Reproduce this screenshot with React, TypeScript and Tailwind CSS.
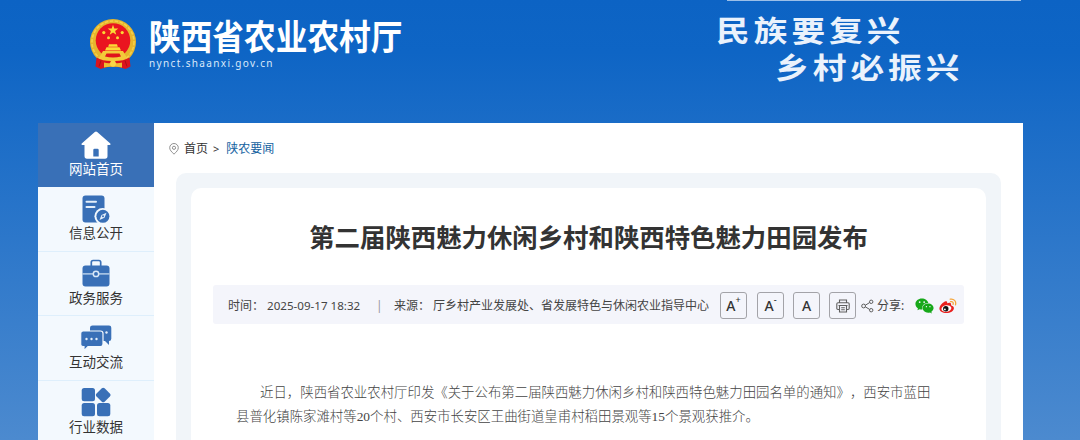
import type { ReactNode } from 'react'
import { FaWeixin } from 'react-icons/fa6'

function Emblem() {
  return (
    <svg viewBox="0 0 48 52" className="h-[52px] w-12">
      <circle cx="24" cy="24" r="23" fill="#e6b52c" />
      <circle cx="24" cy="24" r="21" fill="none" stroke="#f4d04a" strokeWidth="1.6" strokeDasharray="3.500 1.500" />
      <circle cx="24" cy="22.500" r="17.300" fill="#ea1420" />
      <path d="M24 6.800l1.300 3.800h4l-3.200 2.400 1.200 3.800-3.300-2.300-3.300 2.300 1.200-3.800-3.200-2.400h4z" fill="#fbd935" />
      <g fill="#fbd935">
        <circle cx="14.800" cy="14.600" r="1.600" />
        <circle cx="33.200" cy="14.600" r="1.600" />
        <circle cx="19.500" cy="19.800" r="1.500" />
        <circle cx="28.500" cy="19.800" r="1.500" />
        <path d="M20 26.300h8l.8 2.500h-9.600zM17.500 29.300h13l1.500 3.200H16z" />
      </g>
      <path d="M14 33h20l3.500 6-2 3.500q-11.500 3-23 0l-2-3.500z" fill="#f3c93a" />
      <path d="M17.500 35.600h13l1.500 3q-8 2-16 0z" fill="#e0121b" />
      <path d="M7.500 39.500q7 4 16.500 3.500 9.500.5 16.500-3.500l1 9-5 2.500-5-1.500q-7.500-2-15 0l-5 1.500-5-2.500z" fill="#dc141d" />
      <path d="M15 44.500q5 1.500 9 0 4 1.500 9 0v5q-5-1-9-.5-4-.5-9 .5z" fill="#edbd31" />
      <circle cx="24" cy="45.500" r="2.900" fill="#f8d747" />
      <path d="M12 42.500l-2 6M36 42.500l2 6" stroke="#ab1017" />
    </svg>
  )
}

function HomeIcon() {
  return (
    <svg viewBox="0 0 30 28" className="h-7 w-[30px]">
      <path
        fill="currentColor"
        fillRule="evenodd"
        d="M13.8 1q1.2-1 2.4 0L29 12.2q1.3 1.3-.4 1.9H26.500v11q0 2.600-2.500 2.600H6q-2.500 0-2.500-2.600v-11H1.400q-1.700-.6-.4-1.900zM12.300 25.600h5.400V19q0-1.200-1.200-1.200h-3q-1.200 0-1.200 1.200z"
      />
    </svg>
  )
}

function InfoIcon() {
  return (
    <svg viewBox="0 0 28 28" className="h-7 w-7">
      <rect x="0.500" y="0.500" width="22" height="27" rx="3" fill="currentColor" />
      <path d="M4.500 6.700h9.500M4.500 12h8" stroke="#e5effa" strokeWidth="2" strokeLinecap="round" />
      <circle cx="20.700" cy="21.300" r="8.300" fill="#f3f9fe" />
      <circle cx="20.900" cy="21.300" r="6.500" fill="currentColor" />
      <path d="M24.500 17.700l-2 5-5 2.200 2-5z" fill="#e5effa" />
      <circle cx="21" cy="21.300" r="1" fill="currentColor" />
    </svg>
  )
}

function CaseIcon() {
  return (
    <svg viewBox="0 0 28 28" className="h-7 w-7">
      <path d="M9.300 7V3.300q0-1.800 1.800-1.800h5.800q1.800 0 1.800 1.800V7" fill="none" stroke="currentColor" strokeWidth="1.700" />
      <rect x="0.500" y="6.500" width="27" height="21" rx="3" fill="currentColor" />
      <path d="M0.500 14.900h27" stroke="#c9dcf1" strokeWidth="1.300" />
      <circle cx="14" cy="14.900" r="2.700" fill="currentColor" stroke="#d8e8f8" strokeWidth="1.500" />
    </svg>
  )
}

function ChatIcon() {
  return (
    <svg viewBox="0 0 32 26" className="h-[26px] w-8">
      <path d="M12.500 0.500H29q2.300 0 2.300 2.300v11q0 2.200-2.300 2.200v4l-4-4H10V2.800Q10 .5 12.500.5z" fill="currentColor" />
      <path
        d="M3 6h17.500Q23 6 23 8.500V19q0 2.500-2.500 2.500H8L4 25.600V21.500H3Q.7 21.500.7 19V8.500Q.7 6 3 6z"
        fill="currentColor"
        stroke="#f3f9fe"
        strokeWidth="1.200"
      />
      <g fill="#e5effa">
        <circle cx="6.500" cy="14" r="1.200" />
        <circle cx="11.500" cy="14" r="1.200" />
        <circle cx="16.500" cy="14" r="1.200" />
        <circle cx="26.500" cy="7.500" r="1.200" />
      </g>
    </svg>
  )
}

function DataIcon() {
  return (
    <svg viewBox="0 0 30 30" className="h-[30px] w-[30px]" fill="currentColor">
      <rect x="0.700" y="1" width="13.300" height="13.300" rx="2.500" />
      <rect x="0.700" y="16" width="13.300" height="13.300" rx="2.500" />
      <rect x="16" y="16" width="13.300" height="13.300" rx="2.500" />
      <rect x="16.500" y="2.300" width="11.400" height="11.400" rx="2" transform="rotate(45 22.200 8)" />
    </svg>
  )
}

function PinIcon() {
  return (
    <svg viewBox="0 0 10 12" className="h-3 w-2.5" fill="none" stroke="#858585" strokeWidth="0.900">
      <path d="M5 11.200C2.500 8.800.7 7 .7 4.700a4.300 4.200 0 0 1 8.600 0C9.300 7 7.500 8.800 5 11.200z" />
      <circle cx="5" cy="4.800" r="1.600" />
    </svg>
  )
}

function PrintIcon() {
  return (
    <svg viewBox="0 0 14 14" className="h-3.5 w-3.5" fill="none" stroke="#606060" strokeWidth="1.100">
      <path d="M3.500 3.500V1h7v2.500M3.500 10.500H2q-1.200 0-1.200-1.200V4.900q0-1.200 1.200-1.200h10q1.200 0 1.200 1.200v4.400q0 1.200-1.200 1.200h-1.500" />
      <path d="M2.500 6.500h9M3.500 6.500V13h7V6.500M5.200 8.700h3.600M5.200 10.800h3.600" />
    </svg>
  )
}

function ShareIcon() {
  return (
    <svg viewBox="0 0 13 14" className="h-[14px] w-[13px]" fill="none" stroke="#5d5d5d" strokeWidth="1">
      <circle cx="2.600" cy="7" r="1.900" />
      <circle cx="10.200" cy="2.800" r="1.700" />
      <circle cx="10.200" cy="11.200" r="1.700" />
      <path d="M4.400 6.200L8.600 3.600M4.400 7.900l4.200 2.500" />
    </svg>
  )
}

function WeiboIcon() {
  return (
    <svg viewBox="0 0 18 16" className="h-4 w-[18px]">
      <path
        d="M6.800 3.200c1.200-.3 1.700.6 1.300 2 1.900-.8 4.200-.8 4 1.300 0 .5-.2.800.3 1 1.500.5 2.500 1.300 2.500 2.700 0 2.600-3.500 4.900-7.500 4.900C3.400 15.100.4 13.200.4 10.500c0-3 3.900-6.700 6.400-7.300z"
        fill="#e9201f"
      />
      <ellipse cx="7.400" cy="10.500" rx="5" ry="3.300" fill="#fff" transform="rotate(-8 7.400 10.500)" />
      <circle cx="6.800" cy="10.700" r="2.700" fill="#111" />
      <circle cx="5.900" cy="11.400" r="0.900" fill="#fff" />
      <path d="M11.200 1.200c3.600-.8 6.300 2 5.300 5.600M11.600 3.700c1.900-.4 3 .8 2.500 2.600" fill="none" stroke="#f5a53a" strokeWidth="1.300" strokeLinecap="round" />
    </svg>
  )
}

const menu: { label: string; icon: ReactNode }[] = [
  { label: '信息公开', icon: <InfoIcon /> },
  { label: '政务服务', icon: <CaseIcon /> },
  { label: '互动交流', icon: <ChatIcon /> },
  { label: '行业数据', icon: <DataIcon /> },
]

function ToolButton({ children }: { children: ReactNode }) {
  return (
    <button className="flex h-[27px] w-[27px] shrink-0 items-center justify-center rounded-[3px] border border-[#a3a3a8] text-[14px] font-medium text-[#333]">
      {children}
    </button>
  )
}

export default function App() {
  return (
    <div className="flex h-[440px] w-[1080px] flex-col overflow-hidden bg-[linear-gradient(180deg,#0c63c4_0%,#0e65c5_12%,#1a6cc7_28%,#4c8acf_100%)] font-['Noto_Sans','Noto_Sans_CJK_SC',sans-serif] whitespace-nowrap">
      <header className="flex h-[123px] shrink-0 items-start text-white">
        <div className="ml-[89px] mt-[18px] w-12"><Emblem /></div>
        <div className="ml-3 w-[567px]">
          <h1 className="mt-[15px] h-10 origin-left scale-x-[0.905] font-['Noto_Sans_CJK_SC',sans-serif] text-[35px] leading-10 font-bold">陕西省农业农村厅</h1>
          <p className="text-[10px] leading-4 tracking-[1.350px] text-[#dbe9fa]">nynct.shaanxi.gov.cn</p>
        </div>
        <div className="w-[305px] font-['Noto_Sans_CJK_SC',sans-serif] text-[29px] leading-[37px] font-bold tracking-[3.500px] text-[#eaf2fc]">
          <div className="ml-[11px] h-px w-[294px] bg-[#9bbfe8]" />
          <p className="mt-[10px] origin-left scale-x-[1.160]">民族要复兴</p>
          <p className="ml-[59px] origin-left scale-x-[1.160]">乡村必振兴</p>
        </div>
      </header>

      <div className="ml-[38px] flex h-[317px] w-[985px] bg-white">
        <nav className="w-[116px] shrink-0 bg-[#f3f9fe] text-[13.500px] leading-5 text-[#333]">
          <div className="flex h-16 flex-col items-center bg-[#3970b7] text-white">
            <div className="mt-[7px] flex h-[29px] items-center"><HomeIcon /></div>
            <span>网站首页</span>
          </div>
          {menu.map((m) => (
            <div key={m.label} className="flex h-[64.600px] flex-col items-center border-b border-[#deeffc] text-[#3970b7]">
              <div className="mt-[7px] flex h-[29px] items-center">{m.icon}</div>
              <span className="text-[#333]">{m.label}</span>
            </div>
          ))}
        </nav>

        <main className="flex-1">
          <div className="flex h-[50px] items-center pt-0.5 pl-[15px] text-[12px] text-[#333]">
            <PinIcon />
            <span className="ml-[5px]">首页</span>
            <span className="ml-[5px] text-[11px]">&gt;</span>
            <span className="ml-[7px] text-[#15629f]">陕农要闻</span>
          </div>
          <div className="ml-[22px] h-[280px] w-[825px] rounded-t-[10px] bg-[#f1f5f9] px-[15px] pt-[15px]">
            <article className="h-full rounded-t-[10px] bg-white px-[22px] pt-7">
              <h2 className="text-center font-['Noto_Sans_CJK_SC',sans-serif] text-[25.400px] leading-10 font-bold text-[#333]">第二届陕西魅力休闲乡村和陕西特色魅力田园发布</h2>
              <div className="mt-[29px] flex h-[39px] items-center rounded-[3px] bg-[#f4f5fb] pt-0.5 pl-[15px] text-[12px] text-[#444]">
                <span className="w-[39px]">时间：</span>
                <span className="w-[109px] text-[11.600px]">2025-09-17 18:32</span>
                <span className="w-[18px] text-[#999]">|</span>
                <span className="w-[39px]">来源：</span>
                <span className="w-[287px]">厅乡村产业发展处、省发展特色与休闲农业指导中心</span>
                <ToolButton>A<sup className="-top-1.5 text-[9px]">+</sup></ToolButton>
                <span className="w-[10px]" />
                <ToolButton>A<sup className="-top-1.5 text-[9px]">-</sup></ToolButton>
                <span className="w-[9px]" />
                <ToolButton>A</ToolButton>
                <span className="w-[9px]" />
                <ToolButton><PrintIcon /></ToolButton>
                <span className="ml-[5px]"><ShareIcon /></span>
                <span className="ml-[3px] w-[38px]">分享:</span>
                <FaWeixin className="h-[18px] w-[19px] text-[#17a81a]" />
                <span className="ml-[5px]"><WeiboIcon /></span>
              </div>
              <div className="mt-[57px] pl-[23px] font-['Liberation_Serif','Noto_Sans_CJK_SC',serif] text-[13.420px] leading-6 font-light text-[#444] [text-spacing-trim:space-all]">
                <p className="pl-6">近日，陕西省农业农村厅印发《关于公布第二届陕西魅力休闲乡村和陕西特色魅力田园名单的通知》，西安市蓝田</p>
                <p>县普化镇陈家滩村等20个村、西安市长安区王曲街道皇甫村稻田景观等15个景观获推介。</p>
              </div>
            </article>
          </div>
        </main>
      </div>
    </div>
  )
}
